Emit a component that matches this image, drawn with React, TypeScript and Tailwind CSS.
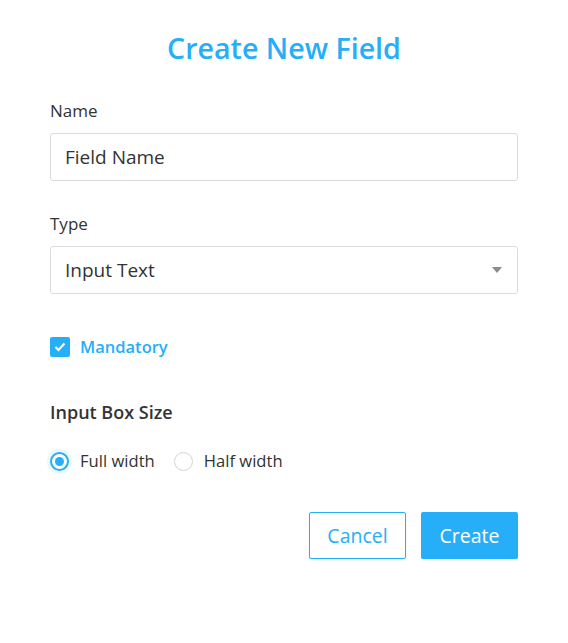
import { useState } from 'react';

const blau = '#27aef9';

function Radio({ an, text, onClick }: { an: boolean; text: string; onClick: () => void }) {
  return (
    <label className="flex cursor-pointer items-center gap-[11px]" onClick={onClick}>
      <span
        className={
          an
            ? 'grid h-[19px] w-[19px] place-items-center rounded-full border-2 border-[#27aef9] bg-white shadow-[0_0_0_3px_#e8f8fb]'
            : 'grid h-[19px] w-[19px] place-items-center rounded-full border border-[#d4d4d4] bg-white'
        }
      >
        {an && <span className="h-[9px] w-[9px] rounded-full bg-[#27aef9]" />}
      </span>
      <span className="text-[16.6px] leading-[24px] text-[#333]">{text}</span>
    </label>
  );
}

export default function App() {
  const [pflicht, setPflicht] = useState(true);
  const [groesse, setGroesse] = useState<'voll' | 'halb'>('voll');

  return (
    <div className="h-[643px] w-[568px] bg-white px-[50px] pt-[28px] font-['Open_Sans',sans-serif]">
      <h1 className="text-center text-[28.6px] font-semibold leading-[40px]" style={{ color: blau }}>
        Create New Field
      </h1>

      <p className="mt-[31px] text-[17px] leading-[24px] text-[#333]">Name</p>
      <input
        defaultValue="Field Name"
        className="mt-[10px] h-[48px] w-full rounded-[3px] border border-[#dcdcdc] px-[14px] text-[19px] text-[#333] outline-none"
      />

      <p className="mt-[31px] text-[17px] leading-[24px] text-[#333]">Type</p>
      <div className="mt-[10px] flex h-[48px] w-full items-center justify-between rounded-[3px] border border-[#dcdcdc] pl-[14px] pr-[15px]">
        <span className="text-[19px] text-[#333]">Input Text</span>
        <svg width="10" height="6" viewBox="0 0 10 6">
          <path d="M0 0h10L5 6z" fill="#8c8c8c" />
        </svg>
      </div>

      <label className="mt-[41px] flex cursor-pointer items-center gap-[10px]" onClick={() => setPflicht(!pflicht)}>
        <span
          className={
            pflicht
              ? 'grid h-[20px] w-[20px] place-items-center rounded-[2px] bg-[#27aef9]'
              : 'grid h-[20px] w-[20px] place-items-center rounded-[2px] border border-[#d4d4d4] bg-white'
          }
        >
          {pflicht && (
            <svg width="12" height="10" viewBox="0 0 12 10">
              <path d="M1.5 5l3 3 6-6.5" fill="none" stroke="white" strokeWidth="2" />
            </svg>
          )}
        </span>
        <span className="text-[16.5px] font-semibold leading-[24px]" style={{ color: blau }}>
          Mandatory
        </span>
      </label>

      <p className="mt-[41px] text-[18px] font-semibold leading-[24px] text-[#333]">Input Box Size</p>

      <div className="mt-[25px] flex items-center gap-[19px]">
        <Radio an={groesse === 'voll'} text="Full width" onClick={() => setGroesse('voll')} />
        <Radio an={groesse === 'halb'} text="Half width" onClick={() => setGroesse('halb')} />
      </div>

      <div className="mt-[39px] flex justify-end gap-[15px]">
        <button className="h-[47px] w-[97px] rounded-[2px] border border-solid border-[#27aef9] bg-white text-[19.5px] text-[#27aef9] shadow-[0_1px_2px_rgba(0,0,0,0.08)]">
          Cancel
        </button>
        <button className="h-[47px] w-[97px] rounded-[2px] bg-[#27aef9] text-[19.5px] text-white shadow-[0_1px_2px_rgba(0,0,0,0.08)]">
          Create
        </button>
      </div>
    </div>
  );
}
